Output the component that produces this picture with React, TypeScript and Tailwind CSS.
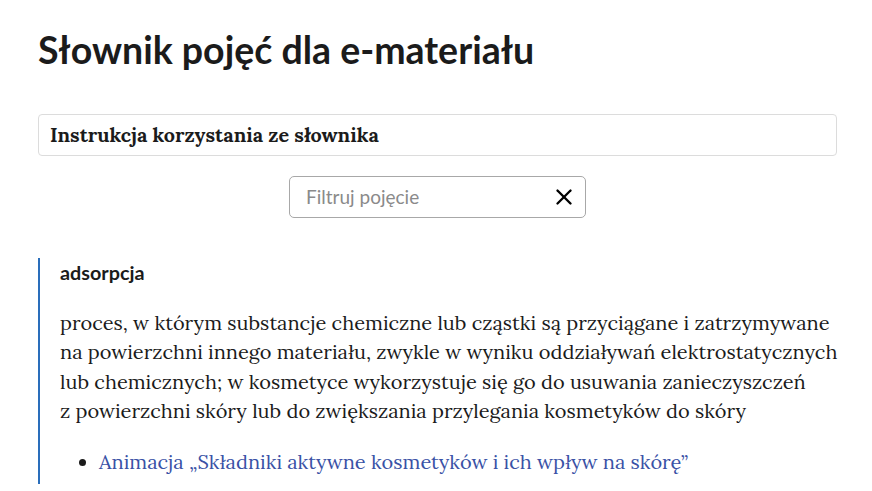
import { X } from "lucide-react";

const serif = "font-['Lora','Liberation_Serif','DejaVu_Serif',serif]";

function Entry() {
  return (
    <div className="mt-10 border-l-2 border-[#2a6ebb] pl-5 pt-[2px] pb-2">
      <h3 className="font-['Lato',sans-serif] text-[19.8px] font-bold leading-6 text-[#1b1b1b]">
        adsorpcja
      </h3>
      <p className={`${serif} mt-[24px] whitespace-nowrap text-[20px] leading-[29.4px] text-[#1b1b1b]`}>
        proces, w którym substancje chemiczne lub cząstki są przyciągane i zatrzymywane
        <br />
        na powierzchni innego materiału, zwykle w wyniku oddziaływań elektrostatycznych
        <br />
        lub chemicznych; w kosmetyce wykorzystuje się go do usuwania zanieczyszczeń
        <br />
        z powierzchni skóry lub do zwiększania przylegania kosmetyków do skóry
      </p>
      <ul className={`${serif} mt-[21px] list-disc pl-[39px] text-[20px] leading-[29px] marker:text-[#1b1b1b]`}>
        <li>
          <a href="#" className="text-[#3a52a6]">
            Animacja „Składniki aktywne kosmetyków i ich wpływ na skórę”
          </a>
        </li>
      </ul>
    </div>
  );
}

export default function App() {
  return (
    <div className="min-h-screen bg-white pl-[38px] pr-[35px] pt-[28px] text-[#1b1b1b]">
      <h1 className="font-['Lato',sans-serif] text-[37.5px] font-bold leading-[44px] text-[#1b1b1b]">
        Słownik pojęć dla e-materiału
      </h1>
      <div className="mt-[42px] flex h-[42px] items-center rounded-sm border border-[#dcdcdc] px-[11px]">
        <span className={`${serif} text-[19.8px] font-bold text-[#1b1b1b]`}>
          Instrukcja korzystania ze słownika
        </span>
      </div>
      <div className="mt-[20px] flex justify-center">
        <div className="flex h-[42px] w-[297px] items-center rounded-[5px] border border-[#a8a8a8] pl-4 pr-2">
          <input
            placeholder="Filtruj pojęcie"
            className="flex-1 bg-transparent font-['Lato',sans-serif] text-[19px] text-[#1b1b1b] outline-none placeholder:text-[#8a8a8a]"
          />
          <X size={26} strokeWidth={2.2} className="text-black" />
        </div>
      </div>
      <Entry />
    </div>
  );
}
